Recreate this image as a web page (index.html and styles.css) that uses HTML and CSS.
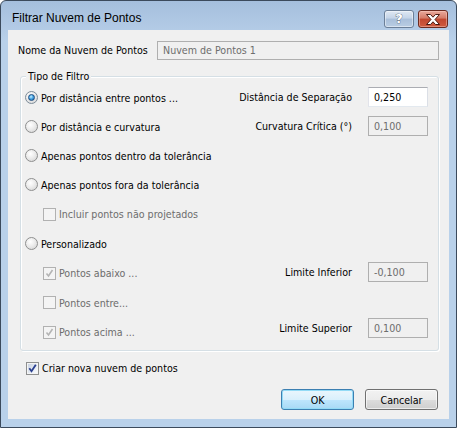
FILE: index.html
```html
<!DOCTYPE html>
<html lang="pt">
<head>
<meta charset="utf-8">
<title>Filtrar Nuvem de Pontos</title>
<link rel="stylesheet" href="styles.css">
</head>
<body>
<div class="window">
  <div class="titlebar">
    <span class="title">Filtrar Nuvem de Pontos</span>
    <div class="caption-btns">
      <div class="cap-btn help"><span class="qmark">?</span></div>
      <div class="cap-btn close">
        <svg width="16" height="11" viewBox="0 0 16 11"><path d="M1.5 0.5 H5.5 L8 3.2 L10.5 0.5 H14.5 L10 5.5 L14.5 10.5 H10.5 L8 7.8 L5.5 10.5 H1.5 L6 5.5 Z" fill="#fff" stroke="#4a1a12" stroke-width="1" stroke-linejoin="round"/></svg>
      </div>
    </div>
  </div>
  <div class="client">
    <div class="name-row">
      <span class="label">Nome da Nuvem de Pontos</span>
      <div class="field disabled wide">Nuvem de Pontos 1</div>
    </div>

    <div class="group">
      <div class="legend">Tipo de Filtro</div>

      <div class="row">
        <div class="opt"><span class="radio on"></span><span>Por distância entre pontos ...</span></div>
        <div class="param"><span>Distância de Separação</span><div class="field small">0,250</div></div>
      </div>
      <div class="row">
        <div class="opt"><span class="radio"></span><span>Por distância e curvatura</span></div>
        <div class="param"><span>Curvatura Crítica (°)</span><div class="field small disabled">0,100</div></div>
      </div>
      <div class="row">
        <div class="opt"><span class="radio"></span><span>Apenas pontos dentro da tolerância</span></div>
      </div>
      <div class="row">
        <div class="opt"><span class="radio"></span><span>Apenas pontos fora da tolerância</span></div>
      </div>
      <div class="row tall">
        <div class="opt sub dim"><span class="cb dis"></span><span>Incluir pontos não projetados</span></div>
      </div>
      <div class="row">
        <div class="opt"><span class="radio"></span><span>Personalizado</span></div>
      </div>
      <div class="row tall">
        <div class="opt sub dim"><span class="cb dis"><svg width="11" height="11" viewBox="0 0 11 11"><path d="M2.5 5.5 L4.5 8 L8.5 2" fill="none" stroke="#b4b4b4" stroke-width="1.6"/></svg></span><span>Pontos abaixo ...</span></div>
        <div class="param mid"><span>Limite Inferior</span><div class="field small disabled">-0,100</div></div>
      </div>
      <div class="row">
        <div class="opt sub dim"><span class="cb dis"></span><span>Pontos entre...</span></div>
      </div>
      <div class="row tall">
        <div class="opt sub dim"><span class="cb dis"><svg width="11" height="11" viewBox="0 0 11 11"><path d="M2.5 5.5 L4.5 8 L8.5 2" fill="none" stroke="#b4b4b4" stroke-width="1.6"/></svg></span><span>Pontos acima ...</span></div>
        <div class="param low"><span>Limite Superior</span><div class="field small disabled">0,100</div></div>
      </div>
    </div>

    <div class="create-row">
      <span class="cb on"><svg width="11" height="11" viewBox="0 0 11 11"><path d="M2.3 5.3 L4.5 8.2 L8.8 1.8" fill="none" stroke="#2a3f8f" stroke-width="1.8"/></svg></span>
      <span>Criar nova nuvem de pontos</span>
    </div>

    <div class="buttons">
      <div class="btn default">OK</div>
      <div class="btn">Cancelar</div>
    </div>
  </div>
</div>
</body>
</html>
```

FILE: styles.css
```css
html, body {
  margin: 0;
  padding: 0;
  background: #ffffff;
}

.window {
  width: 457px;
  height: 428px;
  box-sizing: border-box;
  border: 1px solid #3b4a5c;
  border-radius: 6px 6px 0 0;
  background: linear-gradient(#a5bfdd 0, #b3cbe6 29px, #b9d1ea 40px, #b9d1ea 100%);
  padding: 0 7px 8px 7px;
  display: flex;
  flex-direction: column;
  font-family: "DejaVu Sans Condensed", "DejaVu Sans", sans-serif;
  font-size: 10.6px;
  color: #000;
}

.titlebar {
  height: 29px;
  display: flex;
  align-items: flex-start;
  justify-content: space-between;
}

.title {
  font-family: "Liberation Sans", Arial, sans-serif;
  font-size: 12px;
  margin: 10px 0 0 4px;
  line-height: 14px;
  color: #000;
}

.caption-btns {
  display: flex;
  gap: 4px;
  margin-top: 9px;
  margin-right: 1px;
}

.cap-btn {
  width: 30px;
  height: 18px;
  box-sizing: border-box;
  border-radius: 3px;
  display: flex;
  align-items: center;
  justify-content: center;
}

.cap-btn.help {
  border: 1px solid #6b7f98;
  background: linear-gradient(#dfe8f3 0, #c4d4e8 45%, #a9bfda 50%, #b9cde3 100%);
  box-shadow: inset 0 0 0 1px rgba(255,255,255,0.45);
}

.qmark {
  font-family: "DejaVu Sans", sans-serif;
  font-weight: bold;
  font-size: 13px;
  line-height: 14px;
  color: #fff;
  -webkit-text-stroke: 0.6px #3a4658;
  paint-order: stroke fill;
}

.cap-btn.close {
  border: 1px solid #6b2a20;
  background: linear-gradient(#e9a99c 0, #d57a67 45%, #c1472f 50%, #cf5b3f 100%);
  box-shadow: inset 0 0 0 1px rgba(255,220,210,0.4);
}

.client {
  flex: 1;
  background: #f0f0f0;
  padding: 11px 10px 9px 10px;
  display: flex;
  flex-direction: column;
}

.name-row {
  display: flex;
  align-items: center;
  height: 19px;
}

.label {
  margin-top: -2px;
}

.field {
  box-sizing: border-box;
  height: 19px;
  border: 1px solid #abadb3;
  background: #fff;
  padding: 0 5px;
  line-height: 17px;
  display: flex;
  align-items: center;
}

.field.wide {
  margin-left: auto;
  width: 282px;
}

.field.small {
  width: 60px;
  height: 20px;
  border-color: #abadb3 #dbdfe6 #e3e9ef #e2e3ea;
}

.field.disabled {
  background: #f0f0f0;
  border-color: #afafaf;
  color: #6d6d6d;
}

.group {
  margin: 16px 0 0 2px;
  width: 419px;
  box-sizing: border-box;
  border: 1px solid #d5dfe5;
  border-radius: 3px;
  box-shadow: inset 1px 1px 0 #fff, 1px 1px 0 #fff;
  padding: 0 10px 3px 4px;
  display: flex;
  flex-direction: column;
}

.legend {
  align-self: flex-start;
  margin: -8px 0 0 1px;
  padding: 0 2px;
  line-height: 14px;
  height: 14px;
  background: #f0f0f0;
}

.row {
  height: 29px;
  display: flex;
  align-items: center;
  justify-content: space-between;
}

.row.tall {
  height: 30px;
}

.opt {
  display: flex;
  align-items: center;
  gap: 3px;
}

.opt.sub {
  margin-left: 18px;
}

.dim {
  color: #6d6d6d;
}

.param {
  display: flex;
  align-items: center;
  gap: 16px;
  margin-bottom: 1px;
}

.param.mid {
  margin-bottom: 2px;
}

.param.low {
  margin-bottom: 8px;
}

.radio {
  width: 13px;
  height: 13px;
  box-sizing: border-box;
  border-radius: 50%;
  border: 1px solid #8e8f8f;
  background: radial-gradient(circle at 40% 35%, #ffffff 0, #ececec 45%, #cfcfcf 100%);
  display: flex;
  align-items: center;
  justify-content: center;
  flex: none;
}

.radio.on {
  border-color: #7d8c99;
}

.radio.on::after {
  content: "";
  width: 7px;
  height: 7px;
  box-sizing: border-box;
  border-radius: 50%;
  border: 1px solid #1c4c80;
  background: radial-gradient(circle at 40% 35%, #c8f0ff 0, #4aa8e6 45%, #1360a8 100%);
}

.cb {
  width: 13px;
  height: 13px;
  box-sizing: border-box;
  border: 1px solid #8e8f8f;
  background: linear-gradient(135deg, #d3d6da 0, #f4f4f4 70%, #fbfbfb 100%);
  box-shadow: inset 0 0 0 1px #f4f4f4;
  display: flex;
  align-items: center;
  justify-content: center;
  flex: none;
}

.cb.dis {
  border-color: #b1b1b1;
  background: #f4f4f4;
  box-shadow: none;
}

.cb.on {
  background: linear-gradient(135deg, #c4cede 0, #eef2f8 70%, #fbfbfb 100%);
}

.create-row {
  margin: 9px 0 0 8px;
  height: 16px;
  display: flex;
  align-items: center;
  gap: 3px;
}

.buttons {
  margin-top: 13px;
  display: flex;
  justify-content: flex-end;
  gap: 11px;
  padding-right: 1px;
}

.btn {
  width: 73px;
  height: 21px;
  box-sizing: border-box;
  border: 1px solid #707070;
  border-radius: 3px;
  background: linear-gradient(#f2f2f2 0, #ebebeb 50%, #dddddd 51%, #cfcfcf 100%);
  box-shadow: inset 0 0 0 1px rgba(255,255,255,0.6);
  display: flex;
  align-items: center;
  justify-content: center;
}

.btn.default {
  border-color: #3c7fb1;
  background: linear-gradient(#eaf6fd 0, #d9f0fc 50%, #bee6fd 51%, #a7d9f5 100%);
  box-shadow: inset 0 0 0 1px #93dbf6;
}
```
